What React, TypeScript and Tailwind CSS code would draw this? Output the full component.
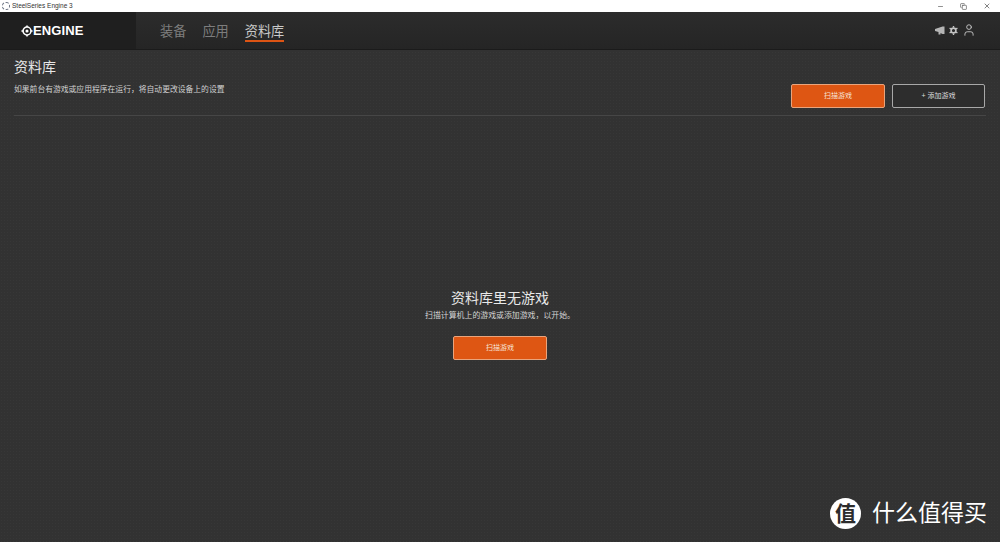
import { X, Minus, Copy, User } from 'lucide-react';

const FONT = "font-['Liberation_Sans','Noto_Sans_CJK_SC',sans-serif]";

const SteelLogo = () => (
    <svg width="12" height="12" viewBox="0 0 14 14" fill="none" stroke="white">
        <circle cx="7" cy="7" r="4.6" strokeWidth="1.8" />
        <circle cx="7" cy="7" r="1.8" fill="white" stroke="none" />
        <path d="M7 0.5V2.4M7 11.6V13.5M0.5 7H2.4M11.6 7H13.5" strokeWidth="1.8" />
    </svg>
);

const HornIcon = () => (
    <svg width="10" height="9" viewBox="0 0 10 9" fill="#b5b5b5">
        <path d="M0 3L7.5 0.5H9.5V8H7.5L5.5 7V8.5H3.5V6L0 5Z" />
    </svg>
);

const GearIcon = () => (
    <svg width="9" height="9" viewBox="0 0 9 9" fill="none" stroke="#c4c4c4">
        <circle cx="4.5" cy="4.5" r="2.4" strokeWidth="1.6" />
        <path d="M4.5 0V1.6M4.5 7.4V9M0.6 2.2L2 3M7 6L8.4 6.8M0.6 6.8L2 6M7 3L8.4 2.2" strokeWidth="1.4" />
    </svg>
);

const OrangeButton = ({ className }: { className: string }) => (
    <button className={`flex h-6 w-[94px] items-center justify-center rounded-[2px] border border-[#e9a47c] bg-[#de5613] text-[7px] text-[#f6e3d6] ${className}`}>
        扫描游戏
    </button>
);

const App = () => {
    return (
        <div className={`flex h-[542px] w-[1000px] flex-col overflow-hidden bg-[#323232] bg-[radial-gradient(#373737_1px,transparent_1px)] bg-[size:3px_3px] ${FONT}`}>
            {/* window title */}
            <div className="flex h-3 shrink-0 items-center bg-white pl-[2px]">
                <div className="h-2 w-2 rounded-full border border-dashed border-gray-500" />
                <span className="ml-[2px] text-[6.5px] leading-none text-[#333]">SteelSeries Engine 3</span>
                <div className="ml-auto flex items-center gap-[16px] pr-[9px] text-[#444]">
                    <Minus className="h-[7px] w-[7px]" />
                    <Copy className="h-[7px] w-[7px]" />
                    <X className="h-[8px] w-[8px]" />
                </div>
            </div>

            {/* top nav */}
            <div className="flex h-[38px] shrink-0 items-stretch border-b border-[#1b1b1b] bg-gradient-to-b from-[#2c2c2c] to-[#252525]">
                <div className="flex w-[136px] items-center bg-[#1f1f1f] pl-[21px]">
                    <SteelLogo />
                    <span className="text-[13px] font-bold leading-none tracking-[0.1px] text-white">ENGINE</span>
                </div>
                <nav className="ml-6 flex items-start gap-[16px] pt-[11px] text-[13.2px] leading-[17px] text-[#7d7d7d]">
                    <span>装备</span>
                    <span>应用</span>
                    <span className="border-b-2 border-[#dd5414] text-[#c9c9c9]">资料库</span>
                </nav>
                <div className="ml-auto flex items-center pr-[24px]">
                    <HornIcon />
                    <span className="ml-[4px]"><GearIcon /></span>
                    <User className="ml-[4px] h-[14px] w-[14px] -translate-y-[1px] text-[#cfcfcf]" strokeWidth={1.5} />
                </div>
            </div>

            {/* page head */}
            <div className="shrink-0 px-[14px]">
                <div className="flex h-[66px] items-start justify-between border-b border-[#464646]">
                    <div>
                        <h1 className="pt-2 text-[14px] leading-[18px] text-[#e6e6e6]">资料库</h1>
                        <p className="mt-[8px] text-[7.8px] leading-[12px] text-[#d0d0d0]">如果前台有游戏或应用程序在运行，将自动更改设备上的设置</p>
                    </div>
                    <div className="flex gap-[7px] pr-px pt-[34px]">
                        <OrangeButton className="" />
                        <button className="flex h-6 w-[93px] items-center justify-center rounded-[2px] border border-[#a8a8a8] bg-[#2d2d2d] text-[7px] text-[#dcdcdc]">
                            + 添加游戏
                        </button>
                    </div>
                </div>
            </div>

            {/* empty state */}
            <div className="flex flex-col items-center pt-[173px]">
                <h2 className="text-[14px] leading-[18px] text-[#e8e8e8]">资料库里无游戏</h2>
                <p className="mt-[3px] text-[7.9px] leading-[12px] text-[#d4d4d4]">扫描计算机上的游戏或添加游戏，以开始。</p>
                <OrangeButton className="mt-[14px]" />
            </div>

            {/* watermark */}
            <div className="absolute left-[830px] top-[498px] flex items-center gap-[11px]">
                <div className="flex h-[31px] w-[31px] items-center justify-center rounded-full bg-white text-[21px] font-bold leading-none text-[#2c2c2c]">值</div>
                <span className="text-[23px] leading-none text-white">什么值得买</span>
            </div>
        </div>
    );
};

export default App;
